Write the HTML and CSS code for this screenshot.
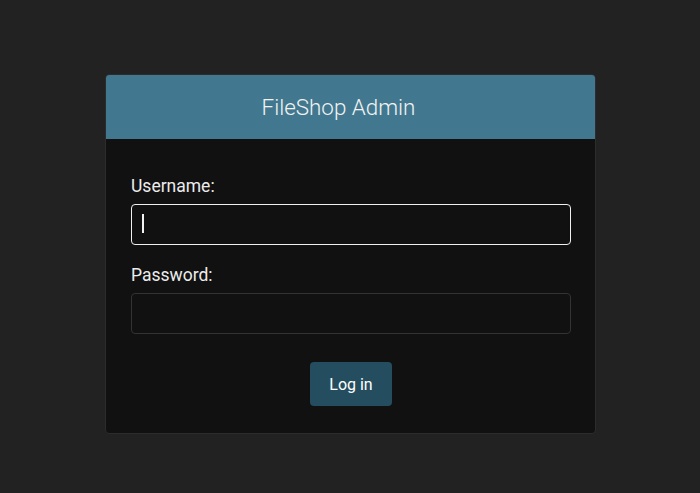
FILE: index.html
```html
<!DOCTYPE html>
<html lang="en">
<head>
<meta charset="utf-8">
<title>FileShop Admin</title>
<link rel="stylesheet" href="styles.css">
</head>
<body>
<div class="card">
  <div class="card-header">
    <h1 class="title">FileShop Admin</h1>
  </div>
  <form class="card-body">
    <label class="label" for="username">Username:</label>
    <div class="field">
      <input class="input input-focused" id="username" type="text">
      <span class="caret"></span>
    </div>
    <label class="label label-second" for="password">Password:</label>
    <div class="field">
      <input class="input" id="password" type="password">
    </div>
    <div class="actions">
      <button class="btn" type="button">Log in</button>
    </div>
  </form>
</div>
</body>
</html>
```
FILE: styles.css
```css
html, body {
  margin: 0;
  padding: 0;
}
body {
  background: #222222;
  font-family: Roboto, "Liberation Sans", Arial, sans-serif;
  color: #e6e6e6;
  padding-top: 74px;
}
.card {
  width: 489px;
  margin: 0 0 0 105px;
  background: #111111;
  border: 1px solid #2c2c2c;
  border-radius: 4px;
  overflow: hidden;
}
.card-header {
  background: #41788f;
  height: 64px;
  display: flex;
  align-items: center;
  justify-content: center;
  padding-right: 24px;
}
.title {
  margin: 0;
  font-weight: 300;
  font-size: 22.4px;
  color: #f2f2f2;
  line-height: 28px;
}
.card-body {
  display: flex;
  flex-direction: column;
  padding: 37px 24px 27px 25px;
}
.label {
  font-size: 17.5px;
  line-height: 20px;
  color: #ececec;
  margin-bottom: 8px;
}
.label-second {
  margin-top: 20px;
}
.field {
  position: relative;
}
.input {
  display: block;
  box-sizing: border-box;
  height: 41px;
  width: 100%;
  background: #111111;
  border: 1px solid #333333;
  border-radius: 4px;
  color: #ffffff;
  font-family: inherit;
  font-size: 20px;
  padding: 0 10px;
  outline: none;
  caret-color: transparent;
}
.input-focused {
  border-color: #f0f0f0;
}
.caret {
  position: absolute;
  left: 11px;
  top: 10px;
  width: 2px;
  height: 19px;
  background: #f2f2f2;
}
.actions {
  display: flex;
  justify-content: center;
  margin-top: 28px;
}
.btn {
  width: 82px;
  height: 44px;
  background: #244e60;
  color: #ffffff;
  border: none;
  border-radius: 4px;
  font-family: inherit;
  font-size: 16px;
  cursor: pointer;
}
```
